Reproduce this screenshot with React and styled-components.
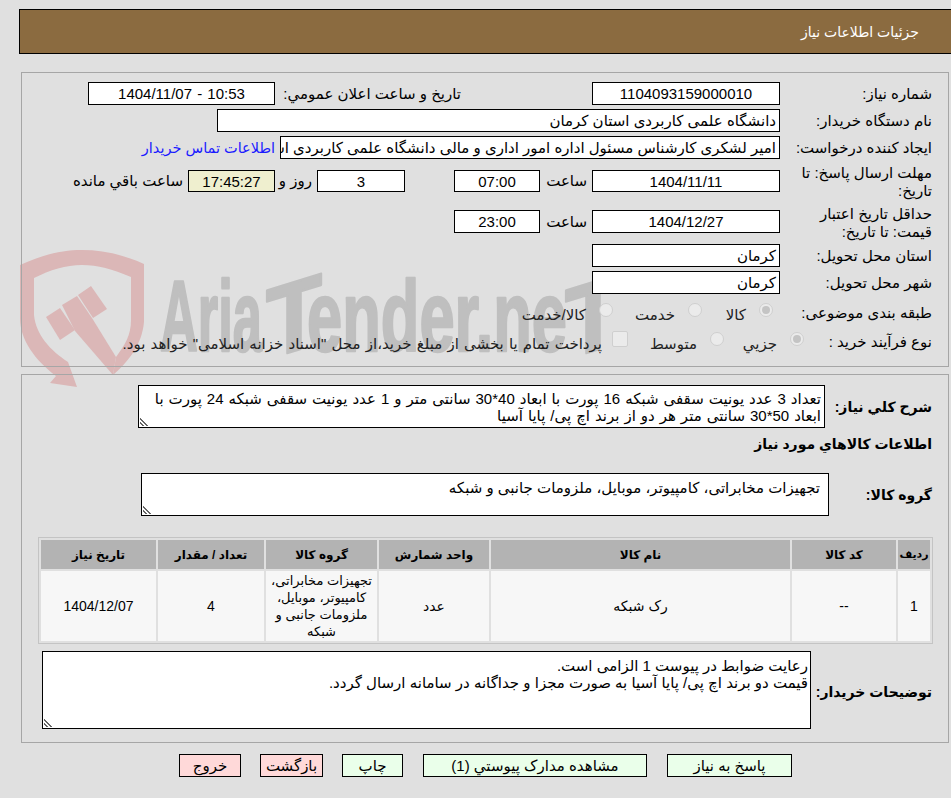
import React from 'react';
import styled, { createGlobalStyle } from 'styled-components';

const FONT = '"Liberation Sans", "DejaVu Sans", sans-serif';

const Global = createGlobalStyle`
  html, body { margin: 0; padding: 0; background: #e0e0e0; }
  body { font-family: ${FONT}; font-size: 15px; color: #000; }
`;

const Page = styled.div`
  position: relative;
  width: 951px;
  height: 798px;
  overflow: hidden;
  padding: 9px 2px 0 21px;
  box-sizing: border-box;
  direction: rtl;
`;

const Content = styled.div`
  position: relative;
  z-index: 1;
`;

const Header = styled.div`
  height: 45px;
  box-sizing: border-box;
  margin: 0 -10px 0 -2px;
  border: 1px solid #000;
  background: #8b6b40;
  color: #fff;
  padding: 11px 39px 0 0;
  font-size: 14px;
  line-height: 22px;
`;

const Panel = styled.div`
  box-sizing: border-box;
  border: 1px solid #a6a6a6;
  padding: ${(p) => p.$top}px 16px 0 0;
  margin-top: ${(p) => p.$gap}px;
  height: ${(p) => p.$h}px;
`;

const Row = styled.div`
  display: flex;
  align-items: center;
  height: ${(p) => p.$h || 27}px;
  margin-top: ${(p) => p.$mt || 0}px;
`;

const Label = styled.div`
  box-sizing: border-box;
  width: ${(p) => p.$w || 152}px;
  padding-top: ${(p) => p.$pt || 0}px;
  flex: none;
  line-height: 18px;
  white-space: pre-line;
`;

const Field = styled.div`
  box-sizing: border-box;
  width: ${(p) => p.$w}px;
  height: ${(p) => p.$h || 23}px;
  flex: none;
  border: 1px solid #000;
  background: ${(p) => p.$bg || '#fff'};
  line-height: 21px;
  padding: 0 3px;
  white-space: nowrap;
  overflow: hidden;
  direction: ${(p) => (p.$ltr ? 'ltr' : 'rtl')};
  text-align: ${(p) => (p.$center ? 'center' : 'right')};
  word-spacing: ${(p) => (p.$ltr ? 1 : 0)}px;
  margin-right: ${(p) => p.$mr || 0}px;
`;

const Word = styled.span`
  flex: none;
  box-sizing: border-box;
  width: ${(p) => p.$w}px;
  padding-right: 5px;
  margin-right: ${(p) => p.$mr || 0}px;
  white-space: nowrap;
`;

const ContactLink = styled.a`
  color: #1a1aff;
  font-size: 14.5px;
  white-space: nowrap;
  margin-right: 5px;
`;

const Option = styled.label`
  display: flex;
  align-items: center;
  flex: none;
  width: ${(p) => (p.$w ? `${p.$w}px` : 'auto')};
  padding-top: 4px;
  color: #222;
  white-space: nowrap;
  word-spacing: ${(p) => p.$ws || 0}px;
`;

const Radio = styled.i`
  box-sizing: border-box;
  width: 14px;
  height: 14px;
  flex: none;
  border-radius: 50%;
  border: 1px solid #cfcfcf;
  background: #ebebeb;
  margin: -10px 0 0 13px;
  display: flex;
  align-items: center;
  justify-content: center;
  &::after {
    content: '';
    width: 8px;
    height: 8px;
    border-radius: 50%;
    background: ${(p) => (p.$on ? '#c4c4c4' : 'transparent')};
  }
`;

const Check = styled.i`
  box-sizing: border-box;
  width: 16px;
  height: 16px;
  flex: none;
  border-radius: 2px;
  border: 1px solid #cfcfcf;
  background: #ebebeb;
  margin: -10px 0 0 10px;
`;

const Area = styled.div`
  position: relative;
  box-sizing: border-box;
  flex: none;
  width: ${(p) => p.$w}px;
  height: ${(p) => p.$h}px;
  border: 1px solid #000;
  background: #fff;
  padding: ${(p) => p.$pad};
  word-spacing: ${(p) => p.$ws || 0}px;
  line-height: 17px;
  white-space: pre-line;
  &::after {
    content: '';
    position: absolute;
    left: 1px;
    bottom: 1px;
    width: 9px;
    height: 9px;
    background: repeating-linear-gradient(45deg, transparent 0 1.5px, #666 1.5px 3px);
    clip-path: polygon(0 0, 100% 100%, 0 100%);
  }
`;

const BoldLabel = styled.div`
  font-weight: bold;
  font-size: 14px;
  line-height: 18px;
  flex: none;
  width: ${(p) => (p.$w ? `${p.$w}px` : 'auto')};
  margin-top: ${(p) => p.$mt || 0}px;
  white-space: nowrap;
`;

const Table = styled.table`
  box-sizing: border-box;
  width: 895px;
  height: 107px;
  margin: 21px -1px 0 0;
  border: 1px solid #c4c4c4;
  border-spacing: 2px;
  table-layout: fixed;
`;

const Th = styled.th`
  background: #b3b3b3;
  height: 29px;
  padding: 0;
  font-size: ${(p) => p.$fs || 12}px;
  font-weight: bold;
  white-space: nowrap;
  width: ${(p) => p.$w}px;
`;

const Td = styled.td`
  background: #f7f7f7;
  height: 70px;
  padding: 0;
  text-align: center;
  font-size: ${(p) => p.$fs || 14}px;
  line-height: 17px;
`;

const Buttons = styled.div`
  display: flex;
  gap: 19px;
  margin: 11px 157px 0 0;
`;

const Btn = styled.button`
  box-sizing: border-box;
  width: ${(p) => p.$w}px;
  height: 23px;
  margin-left: ${(p) => p.$ml || 0}px;
  padding: 0;
  font: 15px ${FONT};
  color: #000;
  border: 1px solid #000;
  background: ${(p) => (p.$red ? '#ffd9d9' : '#eaffea')};
`;

const Mark = styled.svg`
  position: absolute;
  left: 0;
  top: 0;
  pointer-events: none;
`;

const MarkText = styled.text`
  font-family: "Liberation Sans Narrow", "Liberation Sans", sans-serif;
  font-weight: 700;
  font-size: 100px;
  fill: #bfbfbf;
  stroke: #bfbfbf;
  stroke-width: 2.5px;
  stroke-linejoin: round;
  direction: ltr;
`;

function Watermark() {
  return (
    <Mark width="951" height="798" viewBox="0 0 951 798">
      <g fill="#dbb7b7">
        <path d="M20 265 C45 254 62 250 82 250 C102 250 122 254 144 264 L144 322 C142 345 128 362 113 375 L116 357 C125 345 131 335 131 320 L131 277 C112 269 98 265 82 265 C66 265 50 270 34 278 L34 315 C36 335 50 350 68 362 L77 387 L50 383 L56 376 C35 360 20 340 20 318 Z" />
        <path d="M46 317 L60 308 L75 330 L60 340 Z" />
        <path d="M62 305 L77 296 L92 318 L116 357 L113 375 L75 331 Z" />
        <path d="M78 295 L91 286 L107 309 L93 318 Z" />
      </g>
      <MarkText x="160" y="351" textLength="102" lengthAdjust="spacingAndGlyphs">Aria</MarkText>
      <MarkText x="266" y="351" textLength="56" lengthAdjust="spacingAndGlyphs" transform="translate(294 351) skewY(-17) translate(-294 -351)">T</MarkText>
      <MarkText x="307" y="351" textLength="260" lengthAdjust="spacingAndGlyphs">ender.ne</MarkText>
      <MarkText x="565" y="351" textLength="56" lengthAdjust="spacingAndGlyphs" transform="translate(593 351) skewY(-17) translate(-593 -351)">T</MarkText>
    </Mark>
  );
}

export default function App() {
  return (
    <>
      <Global />
      <Page>
        <Watermark />
        <Content>
          <Header>جزئیات اطلاعات نیاز</Header>
          <Panel $gap={18} $h={295} $top={7}>
            <Row>
              <Label>شماره نیاز:</Label>
              <Field $w={188} $center>1104093159000010</Field>
              <Word $w={191} $mr={126}>تاریخ و ساعت اعلان عمومي:</Word>
              <Field $w={187} $center $ltr>1404/11/07 - 10:53</Field>
            </Row>
            <Row>
              <Label>نام دستگاه خریدار:</Label>
              <Field $w={563}>دانشگاه علمی کاربردی استان کرمان</Field>
            </Row>
            <Row>
              <Label>ایجاد کننده درخواست:</Label>
              <Field $w={500}>امیر لشکری کارشناس مسئول اداره امور اداری و مالی دانشگاه علمی کاربردی استان کرمان</Field>
              <ContactLink>اطلاعات تماس خریدار</ContactLink>
            </Row>
            <Row $h={40}>
              <Label $pt={2}>{'مهلت ارسال پاسخ: تا\nتاریخ:'}</Label>
              <Field $w={188} $h={22} $center>1404/11/11</Field>
              <Word $w={52}>ساعت</Word>
              <Field $w={86} $h={22} $center>07:00</Field>
              <Field $w={88} $h={22} $mr={49} $center>3</Field>
              <Word $w={42}>روز و</Word>
              <Field $w={87} $h={22} $center $bg="#efefcf">17:45:27</Field>
              <Word $w={120}>ساعت باقي مانده</Word>
            </Row>
            <Row $h={41}>
              <Label $pt={2}>{'حداقل تاریخ اعتبار\nقیمت: تا تاریخ:'}</Label>
              <Field $w={188} $center>1404/12/27</Field>
              <Word $w={52}>ساعت</Word>
              <Field $w={86} $center>23:00</Field>
            </Row>
            <Row>
              <Label>استان محل تحویل:</Label>
              <Field $w={188}>کرمان</Field>
            </Row>
            <Row>
              <Label>شهر محل تحویل:</Label>
              <Field $w={188}>کرمان</Field>
            </Row>
            <Row $h={34}>
              <Label $w={159}>طبقه بندی موضوعی:</Label>
              <Option $w={71}><Radio $on />کالا</Option>
              <Option $w={89}><Radio />خدمت</Option>
              <Option><Radio />کالا/خدمت</Option>
            </Row>
            <Row $h={24}>
              <Label $w={128}>نوع فرآیند خرید :</Label>
              <Option $w={80}><Radio $on />جزیي</Option>
              <Option $w={96}><Radio />متوسط</Option>
              <Option $ws={1}><Check />پرداخت تمام یا بخشی از مبلغ خرید،از محل "اسناد خزانه اسلامی" خواهد بود.</Option>
            </Row>
          </Panel>
          <Panel $gap={7} $h={369} $top={10}>
            <Row $h={43}>
              <BoldLabel $w={107}>شرح کلي نیاز:</BoldLabel>
              <Area $w={687} $h={43} $pad="4px 3px 0" $ws={0.8}>{'تعداد 3 عدد یونیت سقفی شبکه 16 پورت با ابعاد 40*30 سانتی متر و 1 عدد یونیت سقفی شبکه 24 پورت با\nابعاد 50*30 سانتی متر هر دو از برند اچ پی/ پایا آسیا'}</Area>
            </Row>
            <BoldLabel $mt={7}>اطلاعات کالاهاي مورد نیاز</BoldLabel>
            <Row $h={43} $mt={20}>
              <BoldLabel $w={103}>گروه کالا:</BoldLabel>
              <Area $w={688} $h={43} $pad="5px 8px 0">تجهیزات مخابراتی، کامپیوتر، موبایل، ملزومات جانبی و شبکه</Area>
            </Row>
            <Table>
              <thead>
                <tr>
                  <Th $w={32} $fs={11}>ردیف</Th>
                  <Th $w={104}>کد کالا</Th>
                  <Th $w={299}>نام کالا</Th>
                  <Th $w={110}>واحد شمارش</Th>
                  <Th $w={111}>گروه کالا</Th>
                  <Th $w={106}>تعداد / مقدار</Th>
                  <Th $w={115}>تاریخ نیاز</Th>
                </tr>
              </thead>
              <tbody>
                <tr>
                  <Td>1</Td>
                  <Td>--</Td>
                  <Td>رک شبکه</Td>
                  <Td>عدد</Td>
                  <Td $fs={13}>تجهیزات مخابراتی، کامپیوتر، موبایل، ملزومات جانبی و شبکه</Td>
                  <Td>4</Td>
                  <Td>1404/12/07</Td>
                </tr>
              </tbody>
            </Table>
            <Row $h={78} $mt={7}>
              <BoldLabel $w={121} $mt={4}>توضیحات خریدار:</BoldLabel>
              <Area $w={769} $h={78} $pad="5px 2px 0">{'رعایت ضوابط در پیوست 1 الزامی است.\nقیمت دو برند اچ پی/ پایا آسیا به صورت مجزا و جداگانه در سامانه ارسال گردد.'}</Area>
            </Row>
          </Panel>
          <Buttons>
            <Btn $w={125} $ml={1}>پاسخ به نیاز</Btn>
            <Btn $w={224} $ml={1}>مشاهده مدارک پیوستي (1)</Btn>
            <Btn $w={61}>چاپ</Btn>
            <Btn $w={63} $red>بازگشت</Btn>
            <Btn $w={62} $red>خروج</Btn>
          </Buttons>
        </Content>
      </Page>
    </>
  );
}
